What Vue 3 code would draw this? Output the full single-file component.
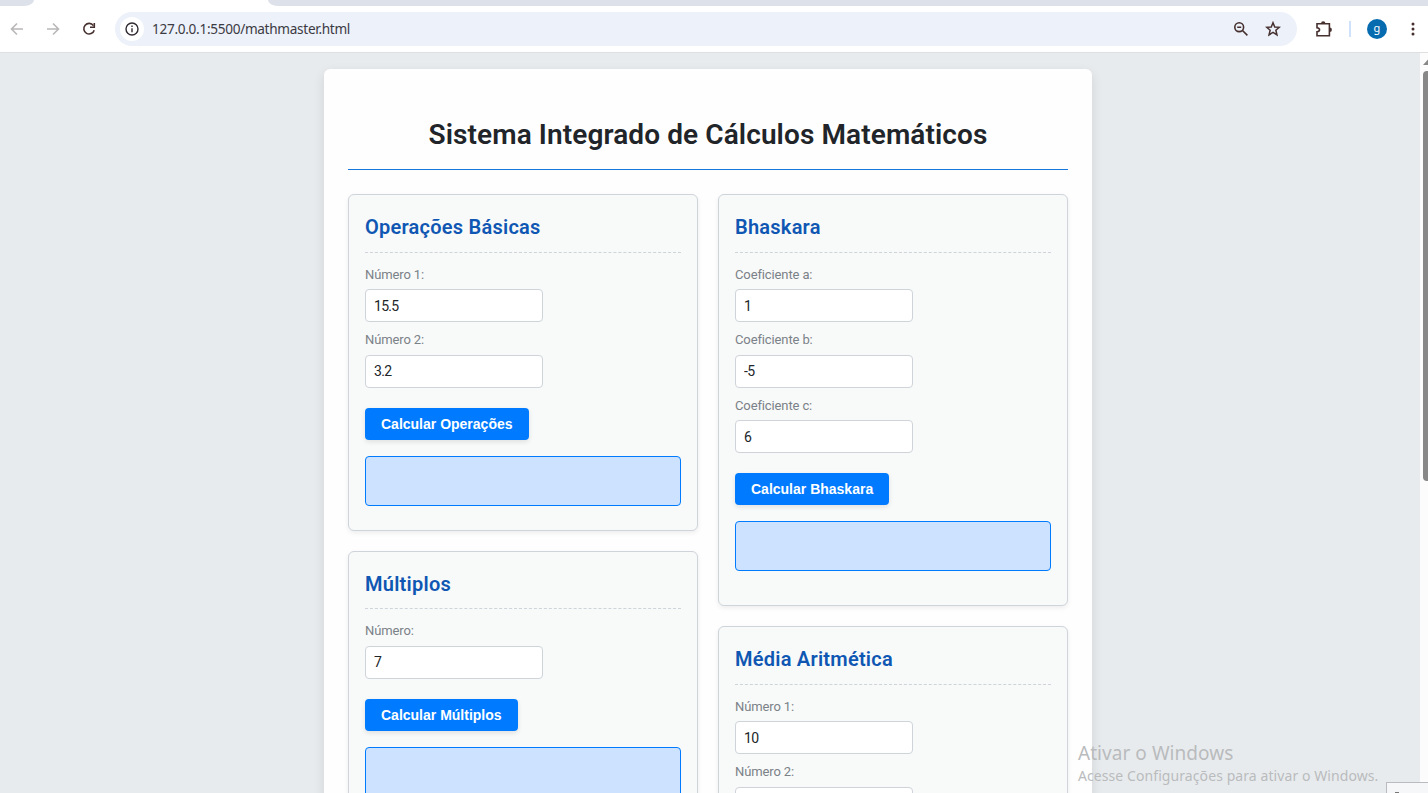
<script setup>
const columns = [
  [
    { title: 'Operações Básicas', cls: 'basic', fields: [['Número 1:', '15.5'], ['Número 2:', '3.2']], action: 'Calcular Operações' },
    { title: 'Múltiplos', cls: 'multiples', fields: [['Número:', '7']], action: 'Calcular Múltiplos' },
  ],
  [
    { title: 'Bhaskara', cls: 'bhaskara', fields: [['Coeficiente a:', '1'], ['Coeficiente b:', '-5'], ['Coeficiente c:', '6']], action: 'Calcular Bhaskara' },
    { title: 'Média Aritmética', cls: 'average', fields: [['Número 1:', '10'], ['Número 2:', '']], action: '' },
  ],
]
</script>

<template>
  <div class="browser">
    <div class="tabs"><i class="tab-left"></i><i class="tab-right"></i></div>
    <header class="toolbar">
      <svg class="nav back" viewBox="0 0 14 14"><path d="M13 7H2M7 1.5 1.5 7 7 12.5" /></svg>
      <svg class="nav forward" viewBox="0 0 14 14"><path d="M1 7h11M7 1.5 12.5 7 7 12.5" /></svg>
      <svg class="reload" viewBox="0 0 14 14"><path d="M11.4 3.6A5.3 5.3 0 1 0 12.2 8.2" /><path d="M12.3 1v4.3H8" /></svg>
      <div class="address">
        <span class="info"><svg viewBox="0 0 14 14"><circle cx="7" cy="7" r="6" /><path d="M7 6.2v4M7 3.6v1.5" /></svg></span>
        <span class="url">127.0.0.1:5500/mathmaster.html</span>
        <svg class="magnifier" viewBox="0 0 16 16"><circle cx="6.2" cy="6.2" r="4.4" /><path d="M9.5 9.5 14.4 14.4M4.2 6.2h4" /></svg>
        <svg class="star" viewBox="0 0 16 16"><path d="m8 1.7 1.75 4.25 4.6.35-3.5 3 1.1 4.5L8 11.4l-3.95 2.4 1.1-4.5-3.5-3 4.6-.35z" /></svg>
      </div>
      <svg class="puzzle" viewBox="0 0 18 18"><path d="M2 3.8h12.4v12H2v-4c3.4-.4 3.4-3.6 0-4z" /><path class="solid" d="M6 3.4a2.2 2.2 0 0 1 4.4 0zM14.7 7.6a2.2 2.2 0 0 1 0 4.4z" /></svg>
      <i class="separator"></i>
      <span class="avatar">g</span>
      <svg class="more" viewBox="0 0 4 14"><circle cx="2" cy="2" r="1.5" /><circle cx="2" cy="7" r="1.5" /><circle cx="2" cy="12" r="1.5" /></svg>
    </header>

    <div class="viewport">
      <main class="sheet">
        <h1>Sistema Integrado de Cálculos Matemáticos</h1>
        <div class="columns">
          <div v-for="(col, i) in columns" :key="i" class="column">
            <section v-for="card in col" :key="card.title" class="card" :class="card.cls">
              <h2>{{ card.title }}</h2>
              <div v-for="field in card.fields" :key="field[0]" class="field">
                <label>{{ field[0] }}</label>
                <input type="text" :value="field[1]" />
              </div>
              <template v-if="card.action">
                <button>{{ card.action }}</button>
                <div class="result"></div>
              </template>
            </section>
          </div>
        </div>
      </main>
      <div class="scrollbar">
        <svg viewBox="0 0 8 10"><path d="M3 6 8 0.5V6z" /></svg>
        <i></i>
      </div>
    </div>

    <div class="watermark">
      <p class="wm-title">Ativar o Windows</p>
      <p class="wm-text">Acesse Configurações para ativar o Windows.</p>
    </div>
    <div class="corner"><i></i></div>
  </div>
</template>

<style>
body { margin: 0; overflow: hidden; }
</style>

<style scoped>
* { box-sizing: border-box; }
.browser { position: relative; width: 1428px; height: 793px; overflow: hidden; display: flex; flex-direction: column; background: #e8ebee; font-family: Roboto, sans-serif; }
svg { display: block; flex: none; fill: none; stroke: #46302f; stroke-width: 1.6; }
.tabs { height: 6px; flex: none; display: flex; justify-content: space-between; background: #fff; }
.tabs i { background: #dde1e9; }
.tab-left { width: 34px; border-bottom-right-radius: 10px 6px; }
.tab-right { width: 1160px; border-bottom-left-radius: 10px 6px; }
.toolbar { height: 47px; flex: none; display: flex; align-items: center; background: #fff; border-bottom: 1px solid #dedfe1; }
.nav { width: 14px; height: 14px; stroke: #b9b7b8; }
.back { margin-left: 10px; }
.forward { margin-left: 22px; }
.reload { width: 14px; height: 14px; margin-left: 22px; }
.address { width: 1182px; height: 34px; margin-left: 19px; border-radius: 17px; background: #ecf1fa; display: flex; align-items: center; }
.info { width: 24px; height: 24px; margin-left: 5px; border-radius: 50%; background: #fff; display: flex; align-items: center; justify-content: center; }
.info svg { width: 14px; height: 14px; stroke: #302a30; stroke-width: 1.4; }
.url { width: 1073px; margin-left: 8px; font: 13.6px/20px "Noto Sans", sans-serif; letter-spacing: -0.3px; color: #3c3a42; white-space: nowrap; }
.magnifier { width: 16px; height: 16px; margin-left: 8px; }
.star { width: 16px; height: 16px; margin-left: 16px; stroke-width: 1.5; }
.puzzle { width: 18px; height: 18px; margin-left: 18px; }
.puzzle .solid { fill: #46302f; stroke: none; }
.separator { width: 2px; height: 16px; margin-left: 16px; background: #cfe1fb; }
.avatar { width: 20px; height: 20px; margin-left: 16px; border-radius: 50%; background: #076bb0; color: #fff; font: 11px/18px "Noto Sans", sans-serif; text-align: center; }
.more { width: 4px; height: 14px; margin-left: 24px; fill: #46302f; stroke: none; }

.viewport { flex: 1; min-height: 0; display: flex; align-items: flex-start; padding: 16px 0 0 324px; }
.sheet { width: 768px; height: 900px; flex: none; padding: 45px 24px; border-radius: 6px; background: #fefefe; box-shadow: 0 4px 12px rgba(0, 0, 0, 0.1); }
h1 { height: 56px; margin: 0 0 24px; border-bottom: 1px solid #1778dc; text-align: center; font-size: 28px; line-height: 42px; font-weight: 600; letter-spacing: 0.1px; color: #212529; white-space: nowrap; }
.columns { display: flex; gap: 20px; }
.column { width: 350px; display: flex; flex-direction: column; gap: 20px; }
.card { border: 1px solid #ced4da; border-radius: 6px; padding: 16px; background: #f8faf9; box-shadow: 0 2px 5px rgba(0, 0, 0, 0.07); }
.basic { height: 336.5px; }
.bhaskara { height: 412px; }
.multiples, .average { height: 340px; }
h2 { height: 41.8px; margin: 0 0 11.1px; border-bottom: 1px dashed #ced4da; font-size: 20px; line-height: 32px; font-weight: 600; letter-spacing: 0.24px; color: #0f57b3; white-space: nowrap; }
.field { height: 65.4px; }
label { display: block; height: 21px; margin-bottom: 4.4px; font-size: 13px; line-height: 21px; letter-spacing: -0.12px; color: #7b8188; }
input { display: block; width: 178px; height: 33px; padding: 0 8px; border: 1px solid #ced4da; border-radius: 4px; background: #fff; font: 14px/20px Roboto, sans-serif; letter-spacing: -0.7px; color: #212529; outline: none; }
button { display: block; height: 32px; margin: 13px 0 16px; padding: 0 16px; border: 0; border-radius: 4px; background: #007bff; color: #fff; box-shadow: 0 2px 5px rgba(0, 0, 0, 0.1); font: bold 14px/20px "Liberation Sans", sans-serif; letter-spacing: 0; }
.result { height: 50px; border: 1px solid #007bff; border-radius: 4px; background: #cce2ff; }
.scrollbar { width: 8px; height: 740px; flex: none; margin: -16px 0 0 328px; background: #fcfcfc; }
.scrollbar svg { width: 8px; height: 10px; margin-top: 6px; fill: #888; stroke: none; padding: 0; }
.scrollbar i { display: block; width: 5px; height: 410px; margin: 2px 0 0 3px; border-radius: 4px 0 0 4px; background: #888; }

.watermark { position: absolute; left: 1078px; top: 741px; font-family: "Noto Sans", sans-serif; color: #b9bbbd; white-space: nowrap; }
.watermark p { margin: 0; }
.wm-title { font-size: 19px; line-height: 24px; letter-spacing: 0.05px; }
.wm-text { font-size: 14px; line-height: 21px; letter-spacing: 0.08px; }
.corner { position: absolute; left: 1386px; top: 782px; width: 42px; height: 11px; border: solid #b9bbbe; border-width: 1px 0 0 1px; background: #f6f7f8; }
.corner i { display: block; width: 4px; height: 1px; margin: 9px 0 0 8px; background: #777; }
</style>
